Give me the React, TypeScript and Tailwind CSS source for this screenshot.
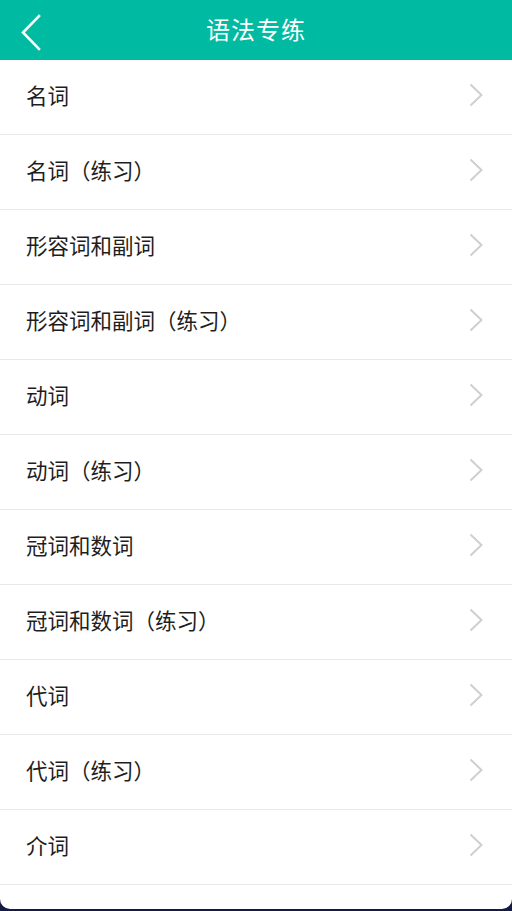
import React from "react";

const items = [
  "名词",
  "名词（练习）",
  "形容词和副词",
  "形容词和副词（练习）",
  "动词",
  "动词（练习）",
  "冠词和数词",
  "冠词和数词（练习）",
  "代词",
  "代词（练习）",
  "介词",
  "",
];

export default function App() {
  return (
    <div
      className="w-[512px] h-[911px] overflow-hidden bg-[#141a42]"
      style={{ fontFamily: '"Noto Sans CJK SC", "Noto Sans", sans-serif' }}
    >
      <div className="h-[909px] overflow-hidden rounded-b-[10px] bg-white flex flex-col">
        <div className="h-[60px] shrink-0 bg-[#00baa1] flex items-center relative">
          <svg
            className="absolute left-[18px] top-[13px]"
            width="26"
            height="40"
            viewBox="0 0 26 40"
          >
            <polyline
              points="21,3 5,19.5 21,36"
              fill="none"
              stroke="white"
              strokeWidth="2.6"
              strokeLinecap="square"
            />
          </svg>
          <div className="flex-1 text-center text-white text-[24px] leading-none tracking-[1px] pb-[2px]">
            语法专练
          </div>
        </div>
        <div className="flex flex-col">
          {items.map((t, i) => (
            <div
              key={i}
              className="h-[75px] shrink-0 flex items-center justify-between border-b border-[#ebe8e6] pl-[26px] pr-[29px] pb-[4px]"
            >
              <span className="text-[21.5px] text-[#1e1e1e] leading-none">{t}</span>
              <svg width="14" height="24" viewBox="0 0 14 24">
                <polyline
                  points="1.5,1.5 12.5,12 1.5,22.5"
                  fill="none"
                  stroke="#cfcfcf"
                  strokeWidth="2"
                />
              </svg>
            </div>
          ))}
        </div>
      </div>
    </div>
  );
}
